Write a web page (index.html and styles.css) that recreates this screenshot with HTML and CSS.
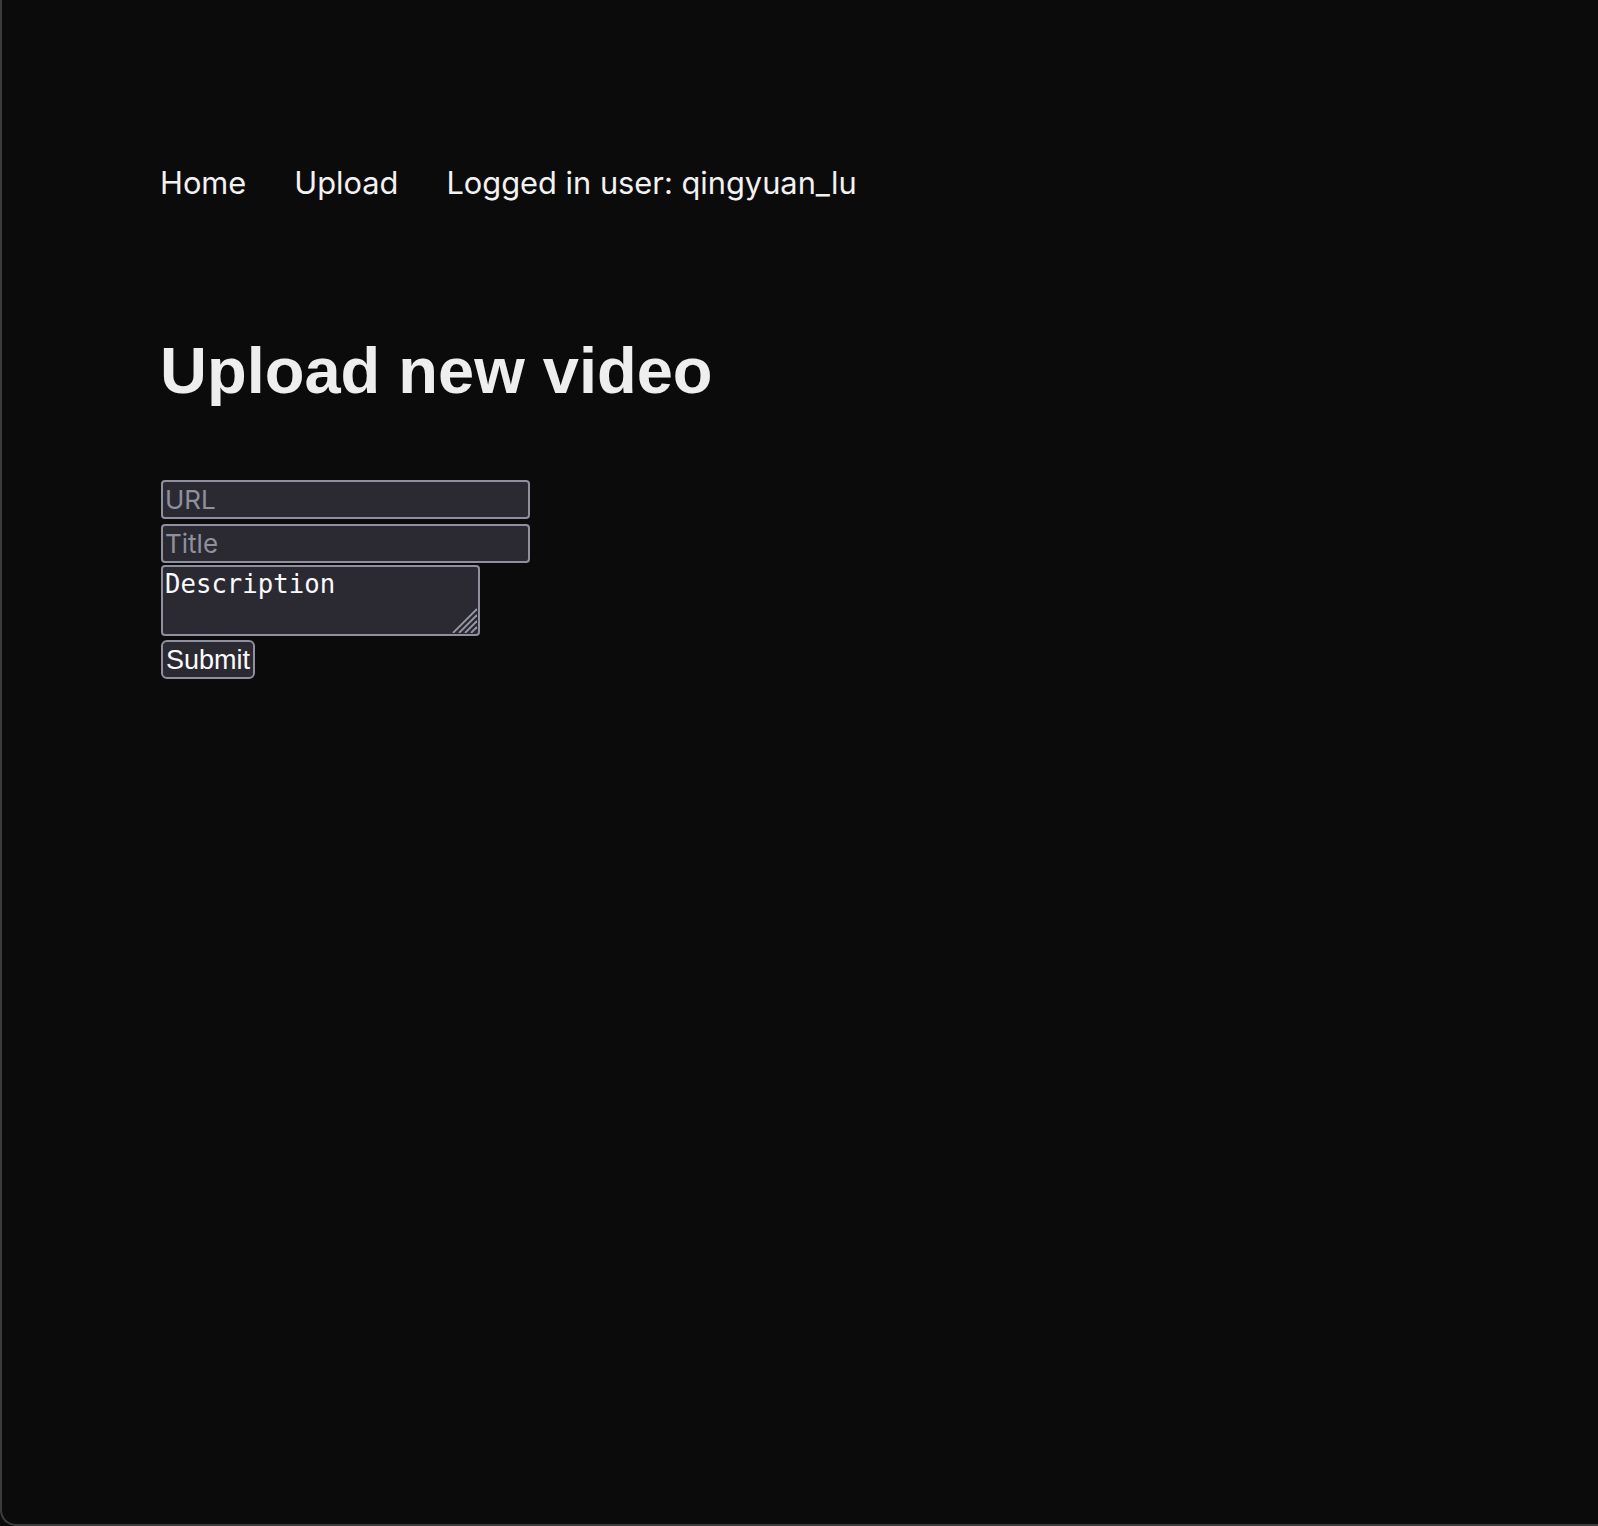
FILE: index.html
```html
<!DOCTYPE html>
<html lang="en">
<head>
<meta charset="utf-8">
<title>Upload new video</title>
<link rel="stylesheet" href="styles.css">
</head>
<body>
<div class="window">
  <div class="page">
    <nav class="nav">
      <a class="nav-link" href="#">Home</a>
      <a class="nav-link" href="#">Upload</a>
      <span class="nav-user">Logged in user: qingyuan_lu</span>
    </nav>
    <h1 class="title">Upload new video</h1>
    <form class="form">
      <input class="field field-url" type="text" placeholder="URL">
      <input class="field field-title" type="text" placeholder="Title">
      <div class="area-wrap">
        <textarea class="area">Description</textarea>
        <svg class="grip" width="26" height="26" viewBox="0 0 26 26">
          <line x1="2" y1="26" x2="26" y2="2" stroke="#9a9aa6" stroke-width="1.8"/>
          <line x1="8" y1="26" x2="26" y2="8" stroke="#9a9aa6" stroke-width="1.8"/>
          <line x1="14" y1="26" x2="26" y2="14" stroke="#9a9aa6" stroke-width="1.8"/>
          <line x1="20" y1="26" x2="26" y2="20" stroke="#9a9aa6" stroke-width="1.8"/>
        </svg>
      </div>
      <button class="submit" type="button">Submit</button>
    </form>
  </div>
</div>
</body>
</html>
```
FILE: styles.css
```css
html, body {
  margin: 0;
  padding: 0;
  background: #0b0b0b;
}
body {
  height: 1526px;
  overflow: hidden;
}
.window {
  box-sizing: border-box;
  height: 1526px;
  border-left: 2px solid #3c3c3c;
  border-bottom: 2px solid #3c3c3c;
  border-bottom-left-radius: 16px;
  background: #0b0b0b;
}
.page {
  padding-left: 158px;
  padding-top: 163px;
}
.nav {
  display: flex;
  align-items: baseline;
  gap: 48px;
  font-family: Inter, "Liberation Sans", sans-serif;
  font-size: 30.8px;
  line-height: 40px;
  color: #f2f2f2;
}
.nav-link, .nav-user {
  color: #f2f2f2;
  text-decoration: none;
}
.title {
  margin: 131px 0 0;
  font-family: "Liberation Sans", Arial, sans-serif;
  font-weight: bold;
  font-size: 65px;
  line-height: 74px;
  color: #eeeeee;
}
.form {
  margin-top: 72px;
  display: flex;
  flex-direction: column;
  align-items: flex-start;
}
.field {
  box-sizing: border-box;
  width: 369px;
  height: 39px;
  margin: 0 0 5px 1px;
  padding: 0 2px;
  border: 2px solid #8f8f9d;
  border-radius: 4px;
  background: #2b2a33;
  color: #fbfbfe;
  font-family: Inter, "Liberation Sans", sans-serif;
  font-size: 26px;
  outline: none;
}
.field-title {
  margin-bottom: 2px;
}
.field::placeholder {
  color: #8f8f9d;
  opacity: 1;
}
.area-wrap {
  position: relative;
  margin-left: 1px;
  height: 71px;
}
.area {
  box-sizing: border-box;
  display: block;
  width: 319px;
  height: 71px;
  margin: 0;
  padding: 2px 2px;
  border: 2px solid #8f8f9d;
  border-radius: 4px;
  background: #2b2a33;
  color: #fbfbfe;
  font-family: "DejaVu Sans Mono", monospace;
  font-size: 25.7px;
  line-height: 30px;
  resize: none;
  outline: none;
}
.grip {
  position: absolute;
  right: 3px;
  bottom: 3px;
}
.submit {
  box-sizing: border-box;
  margin: 4px 0 0 1px;
  width: 94px;
  height: 39px;
  padding: 0 2px;
  border: 2px solid #8f8f9d;
  border-radius: 6px;
  background: #2b2a33;
  color: #fbfbfe;
  font-family: "Liberation Sans", Arial, sans-serif;
  font-size: 27px;
  line-height: 34px;
}
```
